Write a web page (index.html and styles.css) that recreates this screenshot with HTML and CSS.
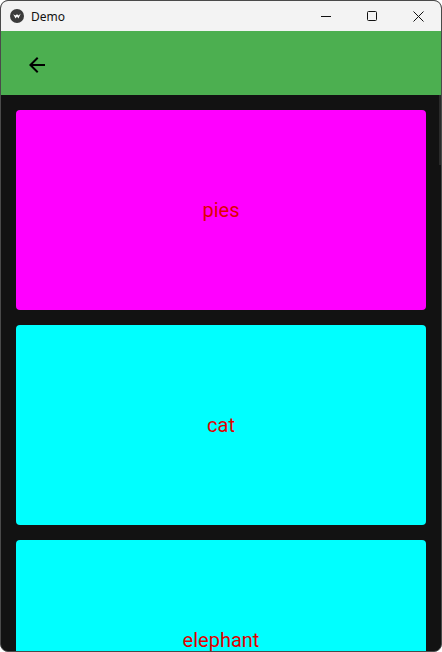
FILE: index.html
```html
<!DOCTYPE html>
<html>
<head>
<meta charset="utf-8">
<link rel="stylesheet" href="styles.css">
</head>
<body>
<div class="window">
  <div class="titlebar">
    <div class="title-left">
      <svg class="app-icon" width="14" height="14" viewBox="0 0 14 14">
        <circle cx="7" cy="7" r="7" fill="#3b3b3b"/>
        <path d="M3.2 5.2 L5.6 9.6 L7 7.4 L8.4 9.6 L10.8 4.4 L8.6 6.6 L7 5.2 L5.4 6.6 Z" fill="#ffffff"/>
      </svg>
      <span class="title">Demo</span>
    </div>
    <div class="controls">
      <div class="ctl">
        <svg width="10" height="10" viewBox="0 0 10 10"><path d="M0 5.5 H10" stroke="#111" stroke-width="1"/></svg>
      </div>
      <div class="ctl">
        <svg width="10" height="10" viewBox="0 0 10 10"><rect x="0.5" y="0.5" width="9" height="9" rx="1" fill="none" stroke="#111" stroke-width="1"/></svg>
      </div>
      <div class="ctl">
        <svg width="11" height="11" viewBox="0 0 11 11"><path d="M0.5 0.5 L10.5 10.5 M10.5 0.5 L0.5 10.5" stroke="#111" stroke-width="1"/></svg>
      </div>
    </div>
  </div>
  <div class="appbar">
    <svg class="back" width="24" height="24" viewBox="0 0 24 24">
      <path d="M20 11H7.83l5.59-5.59L12 4l-8 8 8 8 1.41-1.41L7.83 13H20v-2z" fill="#000"/>
    </svg>
  </div>
  <div class="content">
    <div class="card magenta"><span class="label">pies</span></div>
    <div class="card cyan"><span class="label">cat</span></div>
    <div class="card cyan"><span class="label">elephant</span></div>
    <div class="scroll-thumb"></div>
  </div>
</div>
</body>
</html>
```
FILE: styles.css
```css
html, body {
  margin: 0;
  padding: 0;
  background: #ffffff;
  width: 442px;
  height: 652px;
  overflow: hidden;
}
.window {
  width: 442px;
  height: 652px;
  box-sizing: border-box;
  border: 1px solid #4a4a4a;
  border-radius: 8px;
  overflow: hidden;
  display: flex;
  flex-direction: column;
  background: #121212;
}
.titlebar {
  height: 30px;
  flex: none;
  background: #f3f3f3;
  display: flex;
  align-items: center;
  justify-content: space-between;
}
.title-left {
  display: flex;
  align-items: center;
  padding-left: 9px;
  gap: 7px;
}
.app-icon { display: block; }
.title {
  font-family: "Noto Sans", "Open Sans", sans-serif;
  font-size: 12px;
  color: #111;
}
.controls {
  display: flex;
  height: 30px;
}
.ctl {
  width: 46px;
  height: 30px;
  display: flex;
  align-items: center;
  justify-content: center;
}
.appbar {
  height: 64px;
  box-sizing: border-box;
  flex: none;
  background: #4caf50;
  display: flex;
  align-items: center;
  padding-left: 24px;
  padding-top: 4px;
}
.back { display: block; }
.content {
  position: relative;
  flex: 1;
  display: flex;
  flex-direction: column;
  gap: 15px;
  padding: 15px 15px 0 15px;
  overflow: hidden;
}
.card {
  flex: none;
  width: 410px;
  height: 200px;
  border-radius: 4px;
  display: flex;
  align-items: center;
  justify-content: center;
}
.magenta { background: #ff00ff; }
.cyan { background: #00ffff; }
.label {
  font-family: Roboto, "Noto Sans", sans-serif;
  font-size: 20px;
  color: #e00000;
}
.scroll-thumb {
  position: absolute;
  right: 0;
  top: 0;
  width: 2px;
  height: 70px;
  background: #2a2a2a;
}
```
